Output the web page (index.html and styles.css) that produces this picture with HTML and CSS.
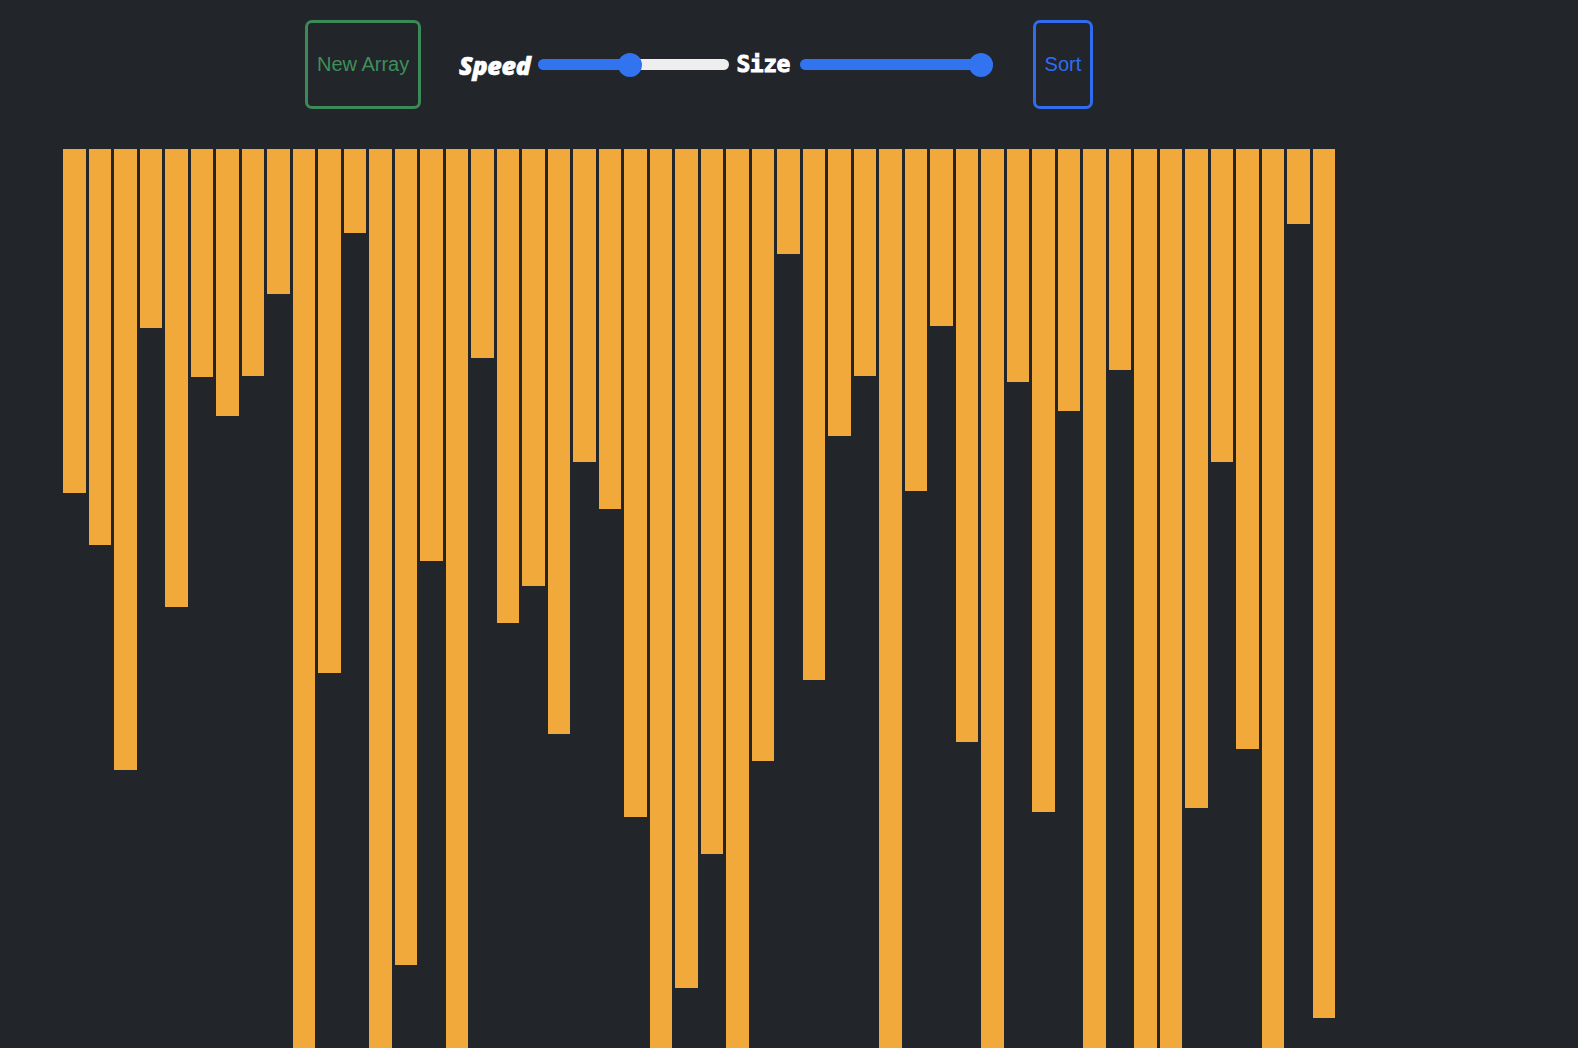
FILE: index.html
```html
<!DOCTYPE html>
<html>
<head>
<meta charset="utf-8">
<title>Sorting Visualizer</title>
<link rel="stylesheet" href="styles.css">
</head>
<body>
<div class="app">
  <div class="toolbar">
    <button class="btn btn-new">New Array</button>
    <span class="label label-speed">Speed</span>
    <input class="slider slider-speed" type="range" min="0" max="100" value="48">
    <span class="label label-size">Size</span>
    <input class="slider slider-size" type="range" min="0" max="100" value="100">
    <button class="btn btn-sort">Sort</button>
  </div>
  <div class="bars">
    <div class="bar" style="height:344px"></div>
    <div class="bar" style="height:396px"></div>
    <div class="bar" style="height:621px"></div>
    <div class="bar" style="height:179px"></div>
    <div class="bar" style="height:458px"></div>
    <div class="bar" style="height:228px"></div>
    <div class="bar" style="height:267px"></div>
    <div class="bar" style="height:227px"></div>
    <div class="bar" style="height:145px"></div>
    <div class="bar" style="height:940px"></div>
    <div class="bar" style="height:524px"></div>
    <div class="bar" style="height:84px"></div>
    <div class="bar" style="height:960px"></div>
    <div class="bar" style="height:816px"></div>
    <div class="bar" style="height:412px"></div>
    <div class="bar" style="height:930px"></div>
    <div class="bar" style="height:209px"></div>
    <div class="bar" style="height:474px"></div>
    <div class="bar" style="height:437px"></div>
    <div class="bar" style="height:585px"></div>
    <div class="bar" style="height:313px"></div>
    <div class="bar" style="height:360px"></div>
    <div class="bar" style="height:668px"></div>
    <div class="bar" style="height:950px"></div>
    <div class="bar" style="height:839px"></div>
    <div class="bar" style="height:705px"></div>
    <div class="bar" style="height:920px"></div>
    <div class="bar" style="height:612px"></div>
    <div class="bar" style="height:105px"></div>
    <div class="bar" style="height:531px"></div>
    <div class="bar" style="height:287px"></div>
    <div class="bar" style="height:227px"></div>
    <div class="bar" style="height:945px"></div>
    <div class="bar" style="height:342px"></div>
    <div class="bar" style="height:177px"></div>
    <div class="bar" style="height:593px"></div>
    <div class="bar" style="height:935px"></div>
    <div class="bar" style="height:233px"></div>
    <div class="bar" style="height:663px"></div>
    <div class="bar" style="height:262px"></div>
    <div class="bar" style="height:925px"></div>
    <div class="bar" style="height:221px"></div>
    <div class="bar" style="height:955px"></div>
    <div class="bar" style="height:915px"></div>
    <div class="bar" style="height:659px"></div>
    <div class="bar" style="height:313px"></div>
    <div class="bar" style="height:600px"></div>
    <div class="bar" style="height:965px"></div>
    <div class="bar" style="height:75px"></div>
    <div class="bar" style="height:869px"></div>
  </div>
</div>
</body>
</html>
```

FILE: styles.css
```css
html, body {
  margin: 0;
  padding: 0;
  background: #222529;
  overflow: hidden;
  height: 100%;
}

.app {
  width: 1272px;
  margin-left: 63px;
  padding-top: 20px;
}

.toolbar {
  display: flex;
  justify-content: center;
  align-items: center;
  height: 89px;
}

.btn {
  box-sizing: border-box;
  height: 89px;
  background: transparent;
  border: 3px solid;
  border-radius: 7px;
  font-family: "Liberation Sans", Arial, sans-serif;
  font-size: 20px;
  padding: 0;
  cursor: pointer;
}

.btn-new {
  width: 116px;
  color: #3f8f5c;
  border-color: #3b8a57;
  margin-right: 38px;
}

.btn-sort {
  width: 60px;
  color: #2f6df2;
  border-color: #2f6cf0;
  margin-left: 40px;
}

.label {
  color: #ffffff;
  font-size: 25px;
  font-weight: 800;
  line-height: 1;
  -webkit-text-stroke: 0.6px #ffffff;
}

.label-speed {
  font-family: "Open Sans", "Noto Sans", sans-serif;
  font-style: italic;
  letter-spacing: -0.3px;
  margin-right: 7px;
  margin-top: 2px;
}

.label-size {
  font-family: "DejaVu Sans Mono", monospace;
  font-weight: bold;
  font-size: 23px;
  letter-spacing: -0.5px;
  margin-left: 8px;
  margin-right: 10px;
  -webkit-text-stroke: 0.9px #ffffff;
}

.slider {
  -webkit-appearance: none;
  appearance: none;
  margin: 0;
  height: 24px;
  background: transparent;
}

.slider-speed {
  width: 191px;
}

.slider-size {
  width: 193px;
}

.slider::-webkit-slider-runnable-track {
  height: 11px;
  border-radius: 6px;
  border: none;
}

.slider-speed::-webkit-slider-runnable-track {
  background: linear-gradient(to right, #3273f0 0, #3273f0 92px, #eeeeee 92px, #eeeeee 100%);
}

.slider-size::-webkit-slider-runnable-track {
  background: #3273f0;
}

.slider::-webkit-slider-thumb {
  -webkit-appearance: none;
  appearance: none;
  width: 24px;
  height: 24px;
  border-radius: 50%;
  background: #3273f0;
  border: none;
  margin-top: -6.5px;
}

.bars {
  display: flex;
  align-items: flex-start;
  gap: 3px;
  margin-top: 40px;
}

.bar {
  width: 22.5px;
  flex: 0 0 22.5px;
  background: #f2a93c;
}
```
